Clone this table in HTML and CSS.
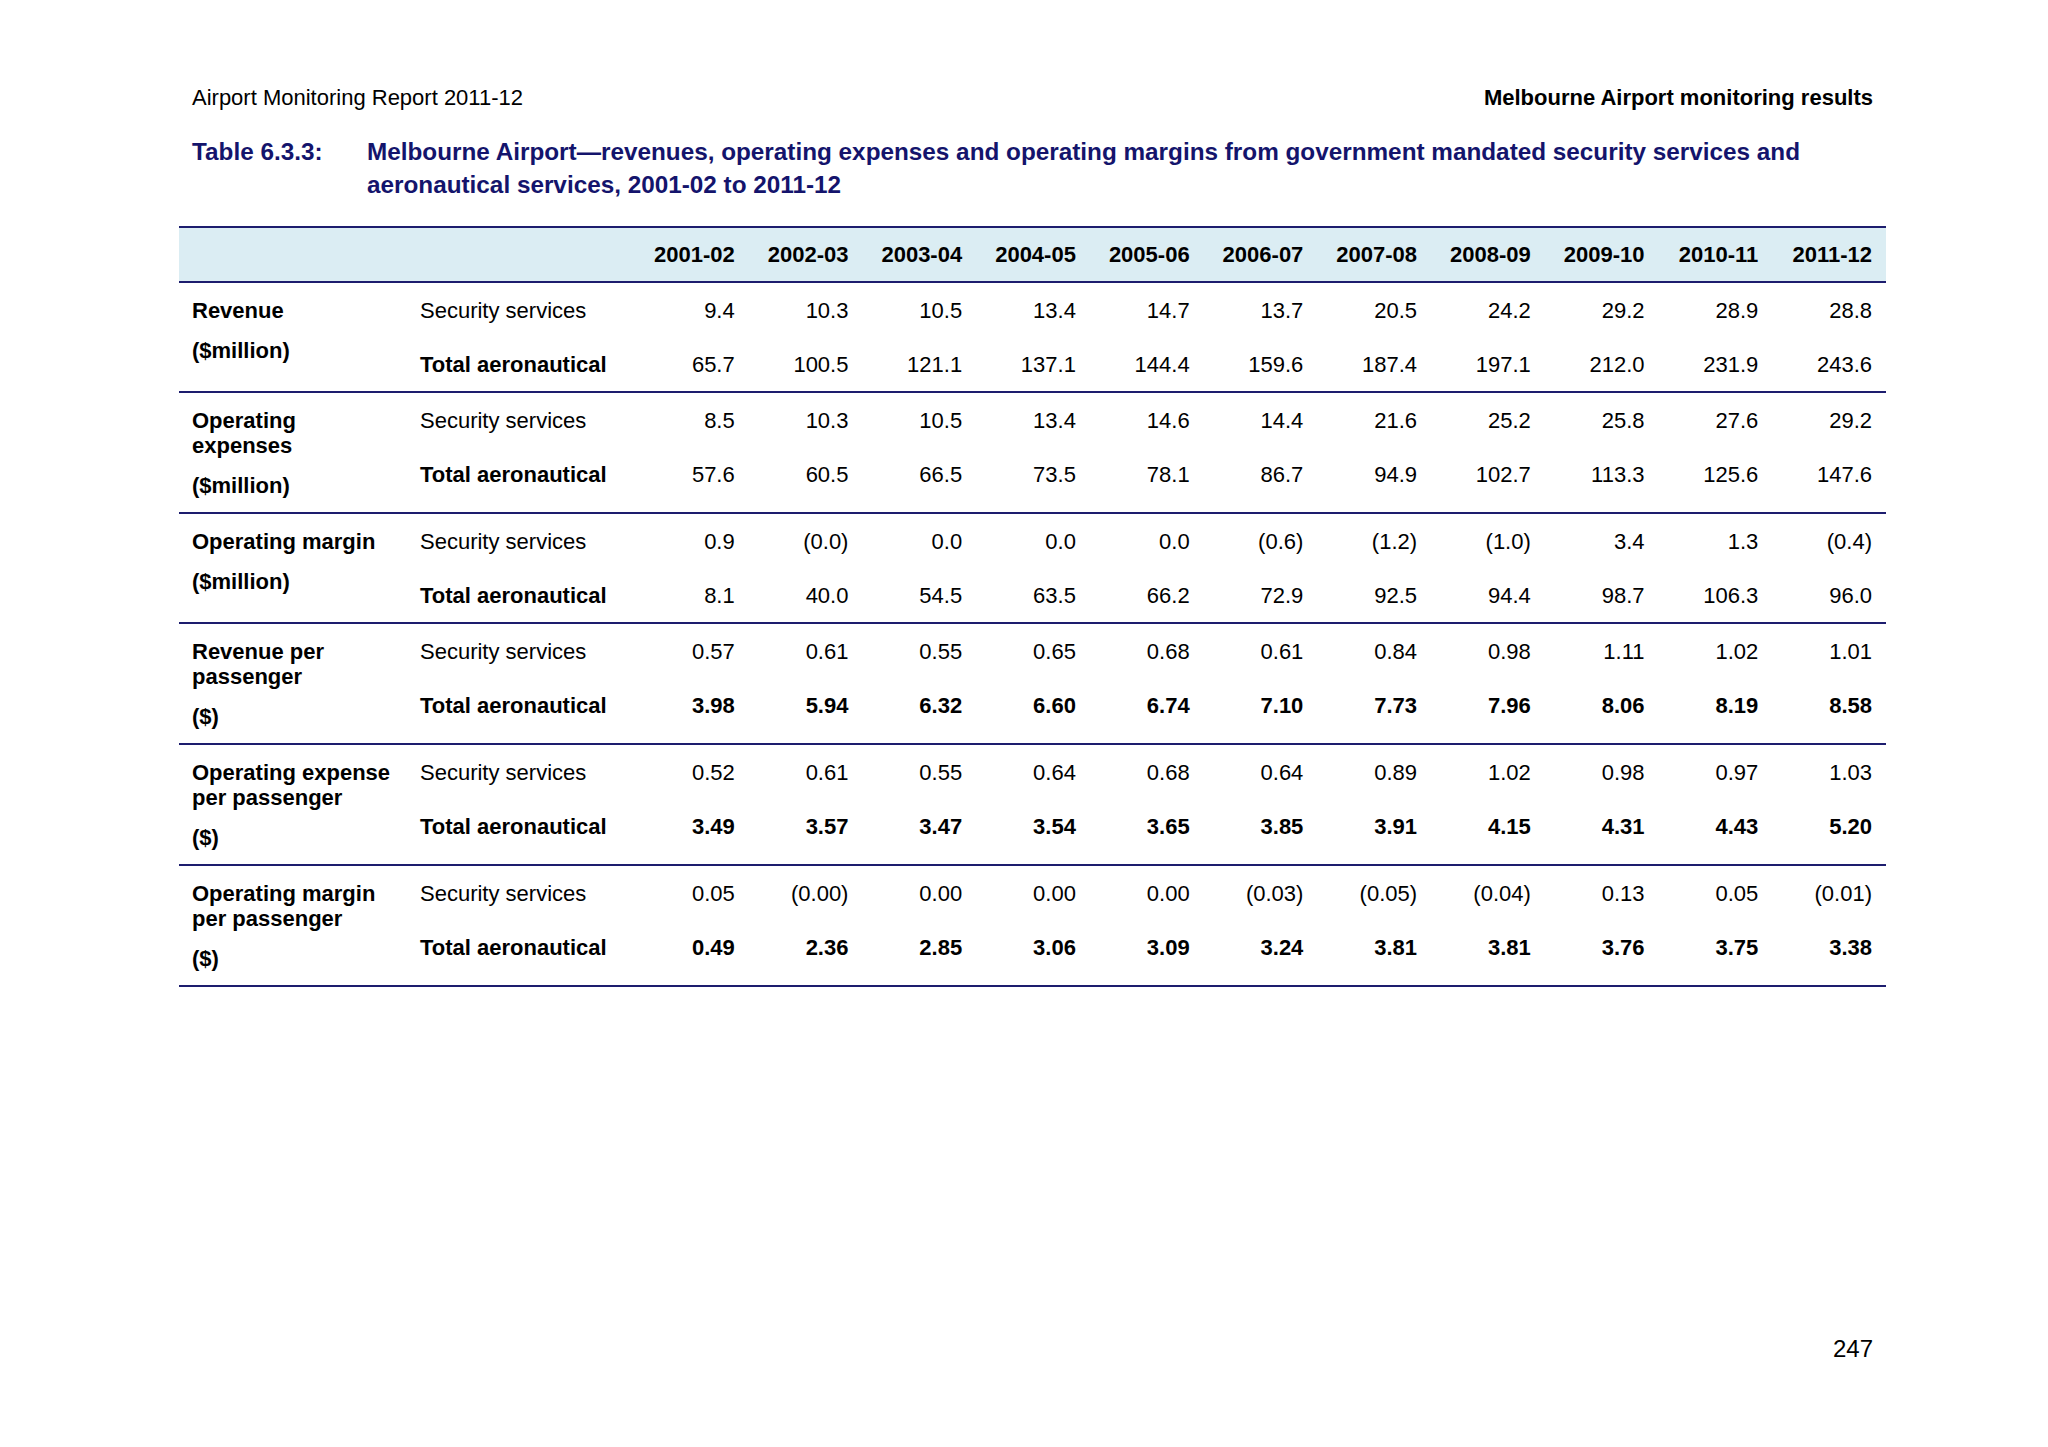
FILE: index.html
```html
<!DOCTYPE html>
<html lang="en">
<head>
<meta charset="utf-8">
<title>Airport Monitoring Report 2011-12</title>
<link rel="stylesheet" href="styles.css">
</head>
<body>
<div class="page">
  <header class="running">
    <span>Airport Monitoring Report 2011-12</span>
    <span class="running-right">Melbourne Airport monitoring results</span>
  </header>

  <div class="caption">
    <span class="cap-num">Table 6.3.3:</span>
    <span class="cap-text">Melbourne Airport—revenues, operating expenses and operating margins from government mandated security services and aeronautical services, 2001-02 to 2011-12</span>
  </div>

  <div class="tbl">
    <div class="row thead">
      <div class="c"></div>
      <div class="c"></div>
      <div class="c n">2001-02</div>
      <div class="c n">2002-03</div>
      <div class="c n">2003-04</div>
      <div class="c n">2004-05</div>
      <div class="c n">2005-06</div>
      <div class="c n">2006-07</div>
      <div class="c n">2007-08</div>
      <div class="c n">2008-09</div>
      <div class="c n">2009-10</div>
      <div class="c n">2010-11</div>
      <div class="c n">2011-12</div>
    </div>

    <div class="grp">
      <div class="lbl"><p>Revenue</p><p class="unit">($million)</p></div>
      <div class="c sub">Security services</div>
      <div class="c n">9.4</div><div class="c n">10.3</div><div class="c n">10.5</div><div class="c n">13.4</div><div class="c n">14.7</div><div class="c n">13.7</div><div class="c n">20.5</div><div class="c n">24.2</div><div class="c n">29.2</div><div class="c n">28.9</div><div class="c n">28.8</div>
      <div class="c sub b">Total aeronautical</div>
      <div class="c n">65.7</div><div class="c n">100.5</div><div class="c n">121.1</div><div class="c n">137.1</div><div class="c n">144.4</div><div class="c n">159.6</div><div class="c n">187.4</div><div class="c n">197.1</div><div class="c n">212.0</div><div class="c n">231.9</div><div class="c n">243.6</div>
    </div>

    <div class="grp">
      <div class="lbl"><p>Operating<br>expenses</p><p class="unit">($million)</p></div>
      <div class="c sub">Security services</div>
      <div class="c n">8.5</div><div class="c n">10.3</div><div class="c n">10.5</div><div class="c n">13.4</div><div class="c n">14.6</div><div class="c n">14.4</div><div class="c n">21.6</div><div class="c n">25.2</div><div class="c n">25.8</div><div class="c n">27.6</div><div class="c n">29.2</div>
      <div class="c sub b">Total aeronautical</div>
      <div class="c n">57.6</div><div class="c n">60.5</div><div class="c n">66.5</div><div class="c n">73.5</div><div class="c n">78.1</div><div class="c n">86.7</div><div class="c n">94.9</div><div class="c n">102.7</div><div class="c n">113.3</div><div class="c n">125.6</div><div class="c n">147.6</div>
    </div>

    <div class="grp">
      <div class="lbl"><p>Operating margin</p><p class="unit">($million)</p></div>
      <div class="c sub">Security services</div>
      <div class="c n">0.9</div><div class="c n">(0.0)</div><div class="c n">0.0</div><div class="c n">0.0</div><div class="c n">0.0</div><div class="c n">(0.6)</div><div class="c n">(1.2)</div><div class="c n">(1.0)</div><div class="c n">3.4</div><div class="c n">1.3</div><div class="c n">(0.4)</div>
      <div class="c sub b">Total aeronautical</div>
      <div class="c n">8.1</div><div class="c n">40.0</div><div class="c n">54.5</div><div class="c n">63.5</div><div class="c n">66.2</div><div class="c n">72.9</div><div class="c n">92.5</div><div class="c n">94.4</div><div class="c n">98.7</div><div class="c n">106.3</div><div class="c n">96.0</div>
    </div>

    <div class="grp">
      <div class="lbl"><p>Revenue per<br>passenger</p><p class="unit">($)</p></div>
      <div class="c sub">Security services</div>
      <div class="c n">0.57</div><div class="c n">0.61</div><div class="c n">0.55</div><div class="c n">0.65</div><div class="c n">0.68</div><div class="c n">0.61</div><div class="c n">0.84</div><div class="c n">0.98</div><div class="c n">1.11</div><div class="c n">1.02</div><div class="c n">1.01</div>
      <div class="c sub b">Total aeronautical</div>
      <div class="c n b">3.98</div><div class="c n b">5.94</div><div class="c n b">6.32</div><div class="c n b">6.60</div><div class="c n b">6.74</div><div class="c n b">7.10</div><div class="c n b">7.73</div><div class="c n b">7.96</div><div class="c n b">8.06</div><div class="c n b">8.19</div><div class="c n b">8.58</div>
    </div>

    <div class="grp">
      <div class="lbl"><p>Operating expense<br>per passenger</p><p class="unit">($)</p></div>
      <div class="c sub">Security services</div>
      <div class="c n">0.52</div><div class="c n">0.61</div><div class="c n">0.55</div><div class="c n">0.64</div><div class="c n">0.68</div><div class="c n">0.64</div><div class="c n">0.89</div><div class="c n">1.02</div><div class="c n">0.98</div><div class="c n">0.97</div><div class="c n">1.03</div>
      <div class="c sub b">Total aeronautical</div>
      <div class="c n b">3.49</div><div class="c n b">3.57</div><div class="c n b">3.47</div><div class="c n b">3.54</div><div class="c n b">3.65</div><div class="c n b">3.85</div><div class="c n b">3.91</div><div class="c n b">4.15</div><div class="c n b">4.31</div><div class="c n b">4.43</div><div class="c n b">5.20</div>
    </div>

    <div class="grp">
      <div class="lbl"><p>Operating margin<br>per passenger</p><p class="unit">($)</p></div>
      <div class="c sub">Security services</div>
      <div class="c n">0.05</div><div class="c n">(0.00)</div><div class="c n">0.00</div><div class="c n">0.00</div><div class="c n">0.00</div><div class="c n">(0.03)</div><div class="c n">(0.05)</div><div class="c n">(0.04)</div><div class="c n">0.13</div><div class="c n">0.05</div><div class="c n">(0.01)</div>
      <div class="c sub b">Total aeronautical</div>
      <div class="c n b">0.49</div><div class="c n b">2.36</div><div class="c n b">2.85</div><div class="c n b">3.06</div><div class="c n b">3.09</div><div class="c n b">3.24</div><div class="c n b">3.81</div><div class="c n b">3.81</div><div class="c n b">3.76</div><div class="c n b">3.75</div><div class="c n b">3.38</div>
    </div>
  </div>

  <footer class="pageno">247</footer>
</div>
</body>
</html>
```

FILE: styles.css
```css
html, body {
  margin: 0;
  padding: 0;
  background: #ffffff;
}

body {
  font-family: "Liberation Sans", Arial, sans-serif;
  font-size: 22px;
  line-height: 25px;
  color: #000000;
}

.page {
  width: 1681px;
  margin-left: 192px;
  padding-top: 85px;
}

.running {
  display: flex;
  justify-content: space-between;
  height: 25px;
}

.running-right {
  font-weight: bold;
}

.caption {
  display: flex;
  margin-top: 25px;
  color: #14146c;
  font-weight: bold;
  font-size: 24.3px;
  line-height: 33px;
}

.cap-num {
  flex: 0 0 175px;
}

.cap-text {
  flex: 1 1 auto;
  padding-right: 60px;
}

.tbl {
  width: 1707px;
  margin-left: -13px;
  margin-top: 25px;
  border-top: 2px solid #1d1d6e;
}

.row,
.grp {
  display: grid;
  grid-template-columns: 227px 229px repeat(11, 1fr);
  border-bottom: 2px solid #1d1d6e;
}

.thead {
  background: #dbedf3;
  font-weight: bold;
}

.thead .c {
  padding: 14px 14px;
}

.grp {
  grid-template-rows: 54px auto;
}

.c {
  padding: 15px 14px 14px 14px;
  align-self: start;
  white-space: nowrap;
}

.n {
  text-align: right;
}

.b {
  font-weight: bold;
}

.lbl {
  grid-row: 1 / span 2;
  padding: 15px 14px 14px 13px;
  font-weight: bold;
}

.lbl p {
  margin: 0;
}

.lbl .unit {
  margin-top: 15px;
}

.pageno {
  margin-top: 349px;
  text-align: right;
  font-size: 24px;
  line-height: 25px;
}
```
